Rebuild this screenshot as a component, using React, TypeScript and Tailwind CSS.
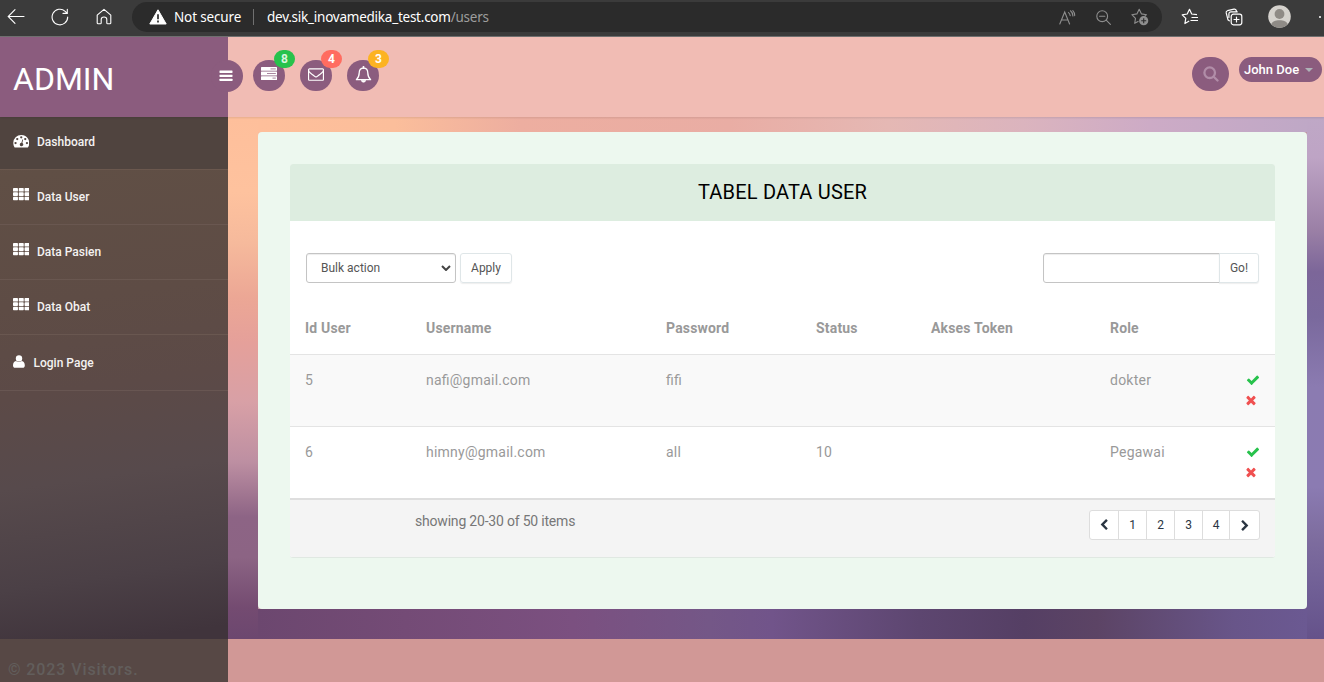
import React from "react";

type IconProps = { className?: string };

const Glyph = ({ d, className, box = "0 0 1792 1792" }: { d: string; className?: string; box?: string }) => (
  <svg viewBox={box} className={className} fill="currentColor" aria-hidden="true">
    <path fillRule="evenodd" d={d} />
  </svg>
);

const CHECK =
  "M1671 566q0 40-28 68l-724 724-136 136q-28 28-68 28t-68-28l-136-136-362-362q-28-28-28-68t28-68l136-136q28-28 68-28t68 28l294 295 656-657q28-28 68-28t68 28l136 136q28 28 28 68z";
const TIMES =
  "M1490 1322q0 40-28 68l-136 136q-28 28-68 28t-68-28l-294-294-294 294q-28 28-68 28t-68-28l-136-136q-28-28-28-68t28-68l294-294-294-294q-28-28-28-68t28-68l136-136q28-28 68-28t68 28l294 294 294-294q28-28 68-28t68 28l136 136q28 28 28 68t-28 68l-294 294 294 294q28 28 28 68z";
const CHEVRON_LEFT =
  "M1427 301l-531 531 531 531q19 19 19 45t-19 45l-166 166q-19 19-45 19t-45-19l-742-742q-19-19-19-45t19-45l742-742q19-19 45-19t45 19l166 166q19 19 19 45t-19 45z";
const ENVELOPE =
  "M1664 1504v-768q-32 36-69 66-268 206-426 338-51 43-83 67t-86.5 48.5-102.5 24.5h-2q-48 0-102.5-24.5t-86.500-48.500-83-67q-158-132-426-338-37-30-69-66v768q0 13 9.500 22.500t22.500 9.500h1472q13 0 22.500-9.500t9.500-22.500zm0-1051v-24.500l-.5-13-3-12.500-5.500-9-9-7.500-14-2.500h-1472q-13 0-22.500 9.500t-9.500 22.500q0 168 147 284 193 152 401 317 6 5 35 29.500t46 37.500 44.500 31.500 50.500 27.500 43 9h2q20 0 43-9t50.500-27.500 44.500-31.500 46-37.500 35-29.500q208-165 401-317 54-43 100.500-115.500t46.500-131.500zm128-37v1088q0 66-47 113t-113 47h-1472q-66 0-113-47t-47-113v-1088q0-66 47-113t113-47h1472q66 0 113 47t47 113z";

const BarsIcon = ({ className }: IconProps) => (
  <svg viewBox="0 0 14 12" className={className} fill="currentColor">
    <rect x="0.5" y="0.6" width="13" height="2.3" rx="0.4" />
    <rect x="0.5" y="4.7" width="13" height="2.3" rx="0.4" />
    <rect x="0.5" y="8.8" width="13" height="2.3" rx="0.4" />
  </svg>
);

const TasksIcon = ({ className }: IconProps) => (
  <svg viewBox="0 0 16 13" className={className}>
    <g fill="#fff">
      <rect width="16" height="3.800" rx="0.5" />
      <rect y="4.6" width="16" height="3.800" rx="0.5" />
      <rect y="9.2" width="16" height="3.800" rx="0.5" />
    </g>
    <g fill="#a986a0">
      <rect x="9.500" y="1.400" width="5.300" height="1" />
      <rect x="6" y="6" width="8.800" height="1" />
      <rect x="11.500" y="10.600" width="3.300" height="1" />
    </g>
  </svg>
);

const BellIcon = ({ className }: IconProps) => (
  <svg viewBox="0 0 16 16" className={className} fill="none" stroke="currentColor" strokeWidth="1.2" strokeLinejoin="round">
    <path d="M8 1.9C5.500 1.9 4 3.800 4 6.200c0 3.400-.9 5-2.700 6.700h13.400C12.900 11.200 12 9.600 12 6.200c0-2.400-1.500-4.300-4-4.300z" />
    <path d="M8 .8v1.100" strokeWidth="1.700" strokeLinecap="round" />
    <path d="M6 13.300a2 2 0 0 0 4 0z" fill="currentColor" strokeWidth="0.600" />
  </svg>
);

const GridIcon = ({ className }: IconProps) => (
  <svg viewBox="0 0 16 12" className={className} fill="currentColor">
    {[0, 4.200, 8.400].map((y) =>
      [0, 5.600, 11.200].map((x) => <rect key={`${x}-${y}`} x={x} y={y} width="4.800" height="3.500" rx="0.700" />),
    )}
  </svg>
);

const GaugeIcon = ({ className }: IconProps) => (
  <svg viewBox="0 0 16 12.600" className={className} fill="currentColor">
    <path
      fillRule="evenodd"
      d="M8 0a8 8 0 0 0-8 8c0 1.500.4 3 1.200 4.200.2.300.4.400.7.400h12.200c.3 0 .5-.1.700-.4A8 8 0 0 0 8 0zM2.300 6.900a1.150 1.150 0 1 1 0 2.300 1.150 1.150 0 0 1 0-2.300zM4 2.900a1.150 1.150 0 1 1 0 2.300 1.150 1.150 0 0 1 0-2.300zM8 1.200a1.150 1.150 0 1 1 0 2.300 1.150 1.150 0 0 1 0-2.300zM12 2.900a1.150 1.150 0 1 1 0 2.300 1.150 1.150 0 0 1 0-2.300zM13.700 6.900a1.150 1.150 0 1 1 0 2.300 1.150 1.150 0 0 1 0-2.300zM9.100 4.400l.8.200-.8 3.400a1.750 1.750 0 1 1-.9-.2z"
    />
  </svg>
);

const UserIcon = ({ className }: IconProps) => (
  <svg viewBox="0 0 12.400 13" className={className} fill="currentColor">
    <circle cx="6.200" cy="3.300" r="3.300" />
    <path d="M3.100 5.900C1 6.200 0 8 0 10.600 0 12.200.9 13 2.300 13h7.600c1.400 0 2.300-.8 2.300-2.400 0-2.600-1-4.400-3.100-4.700-.8.800-1.800 1.200-3 1.200s-2.200-.4-3-1.200z" />
  </svg>
);

const BrowserBar = () => (
  <header className="flex h-[37px] w-full items-center border-b border-[#707070] bg-[#3b3b3b] pb-[3px] font-['Noto_Sans',sans-serif] text-white">
    <svg viewBox="0 0 18 18" className="ml-[7px] size-[18px] shrink-0" fill="none" stroke="#fff" strokeWidth="1.1" strokeLinecap="round">
      <path d="M17 8.500H1.200M8 1.700 1.200 8.500 8 15.300" />
    </svg>
    <svg viewBox="0 0 18 18" className="ml-[26px] size-[18px] shrink-0" fill="none" stroke="#fff" strokeWidth="1.1" strokeLinecap="round">
      <path d="M16.700 9a7.800 7.800 0 1 1-2.500-5.700l1.800 1.900M16.300 1.200v4.200h-4.300" />
    </svg>
    <svg viewBox="0 0 16 17" className="ml-[27px] h-[17px] w-4 shrink-0" fill="none" stroke="#fff" strokeWidth="1.100" strokeLinejoin="round">
      <path d="M1.200 7.200 8 1.300l6.800 5.900v7.700c0 .6-.3.900-.9.900h-2.200c-.6 0-.9-.3-.9-.9v-3.400c0-1.500-1-2.500-2.800-2.500s-2.800 1-2.800 2.500v3.400c0 .6-.3.900-.9.900H2.100c-.6 0-.9-.3-.9-.9z" />
    </svg>
    <div className="ml-[20px] mt-[1px] flex h-[30px] w-[1030px] shrink-0 items-center rounded-full bg-[#2b2b2b] text-[13.500px]">
      <svg viewBox="0 0 18 16" className="ml-[17px] h-4 w-[18px]">
        <path d="M9 .8 17.200 15H.8z" fill="#fff" stroke="#fff" strokeLinejoin="round" />
        <path d="M9 5.200v5M9 11.600v1.800" stroke="#2b2b2b" strokeWidth="1.700" />
      </svg>
      <span className="ml-[7px] w-[79px] whitespace-nowrap tracking-[-0.15px]">Not secure</span>
      <span className="h-4 w-px bg-[#707070]" />
      <span className="ml-[13px] whitespace-nowrap tracking-[-0.24px]">
        dev.sik_inovamedika_test.com<span className="text-[#9d9d9d]">/users</span>
      </span>
      <div className="ml-auto flex items-center pr-[13px] text-[#8e8e8e]">
        <svg viewBox="0 0 17 15" className="mr-[20px] h-[15px] w-[17px]" fill="none" stroke="currentColor" strokeWidth="1.100" strokeLinecap="round">
          <path d="M.8 14 5.700 2l4.900 12M2.500 10h6.400M9.500 2.600c1 .7 1.500 1.600 1.700 3M11.500.8c1.500 1.200 2.300 2.800 2.400 5.200M13.800.6c1.300 1.300 1.900 3 1.900 5" />
        </svg>
        <svg viewBox="0 0 15 15" className="mr-[20px] size-[15px]" fill="none" stroke="currentColor" strokeWidth="1.100" strokeLinecap="round">
          <circle cx="6.200" cy="6.200" r="5.400" />
          <path d="m10.200 10.200 4.200 4.200M3.600 6.200h5.200" />
        </svg>
        <svg viewBox="0 0 18 18" className="size-[18px]" fill="none" stroke="currentColor" strokeWidth="1.100" strokeLinejoin="round">
          <path d="M7.500 13.200 3.700 15.300l.8-5L.9 6.700l5-.8L8.200 1.200l2.300 4.700 5 .8-1.900 1.700" />
          <circle cx="12.700" cy="12.700" r="4.600" fill="currentColor" stroke="none" />
          <path d="M12.700 10.200v5M10.200 12.700h5" stroke="#2b2b2b" />
        </svg>
      </div>
    </div>
    <svg viewBox="0 0 18 18" className="ml-[19px] size-[18px] shrink-0" fill="none" stroke="#fff" strokeWidth="1.200" strokeLinejoin="round">
      <path d="m8.200 13.100-4.300 2.400.9-5.100L1.200 6.800l5-.8 2.300-4.700L10.700 6l5.300.6M10.500 9.500H17M9.500 12.500H17" />
    </svg>
    <svg viewBox="0 0 18 18" className="ml-[26px] size-[18px] shrink-0" fill="none" stroke="#fff" strokeWidth="1.200" strokeLinecap="round">
      <rect x="6.200" y="6.200" width="10.600" height="10.600" rx="2.200" />
      <path d="M11.500 9v5M9 11.500h5M4.300 12.800 3 11.800 1.200 4.900C1 3.800 1.500 3 2.500 2.700L9 1.100c1-.2 1.800.2 2.200 1.200l.3 1.300M3.900 9.500V6c0-1.400.8-2.200 2.200-2.200h6.200" />
    </svg>
    <svg viewBox="0 0 23 23" className="ml-[25px] size-[23px] shrink-0">
      <circle cx="11.500" cy="11.500" r="11.300" fill="#d5d2cd" />
      <circle cx="11.500" cy="9" r="4.900" fill="#8f8b86" />
      <path d="M3.300 19.200c.8-2.900 4-4 8.200-4s7.400 1.100 8.200 4a11.300 11.300 0 0 1-16.400 0z" fill="#8f8b86" />
    </svg>
    <span className="ml-[28px] size-[2px] rounded-full bg-white" />
  </header>
);

const NotifyButton = ({ count, badge, children }: { count: number; badge: string; children: React.ReactNode }) => (
  <div className="relative flex h-[31px] w-8 items-center justify-center rounded-full bg-[#8b5c7e] text-white">
    {children}
    <span className={`absolute -top-[10px] left-[21px] flex h-[18px] w-[21px] items-center justify-center rounded-[9px] text-[12px] font-bold ${badge}`}>
      {count}
    </span>
  </div>
);

const TopBar = () => (
  <div className="z-10 flex h-20 bg-[#f1bcb4] shadow-[0_1px_2px_rgba(0,0,0,0.1)]">
    <div className="relative flex h-20 w-[228px] shrink-0 items-center bg-[#8b5c7e] pl-[13px] pt-1">
      <h1 className="text-[32px] leading-none text-white">ADMIN</h1>
      <div className="absolute left-[211px] top-[23px] flex size-8 items-center justify-center rounded-full bg-[#8b5c7e] pr-[2px]">
        <BarsIcon className="h-3 w-[14px] text-white" />
      </div>
    </div>
    <div className="ml-[25px] flex gap-[15px] pt-[23px]">
      <NotifyButton count={8} badge="bg-[#27c24c] text-[#d9f5df]">
        <TasksIcon className="mb-1 h-[13px] w-4" />
      </NotifyButton>
      <NotifyButton count={4} badge="bg-[#ff6c60] text-white">
        <Glyph d={ENVELOPE} className="mb-[3px] size-4" />
      </NotifyButton>
      <NotifyButton count={3} badge="bg-[#fcb322] text-white">
        <BellIcon className="mb-[3px] size-[17px]" />
      </NotifyButton>
    </div>
    <div className="ml-auto flex items-start pr-[2px] pt-5">
      <div className="mr-[10px] flex h-[34px] w-[37px] items-center justify-center rounded-full bg-[#8b5c7e]">
        <svg viewBox="0 0 16 16" className="size-4" fill="none" stroke="#b18da8" strokeWidth="2.300">
          <circle cx="6.700" cy="6.700" r="5.300" />
          <path d="m10.700 10.700 3.800 3.800" strokeLinecap="round" />
        </svg>
      </div>
      <button className="flex h-[25px] w-[83px] items-center gap-[6px] rounded-full bg-[#8b5c7e] pl-[5px] text-[13px] font-medium text-white">
        <span className="whitespace-nowrap">John Doe</span>
        <svg viewBox="0 0 8 4" className="h-1 w-2">
          <path d="M0 0h8L4 4z" fill="#aeb2b7" />
        </svg>
      </button>
    </div>
  </div>
);

const menu = ["Data User", "Data Pasien", "Data Obat"];

const Sidebar = () => (
  <aside className="flex w-[228px] shrink-0 flex-col bg-linear-[172deg,#64514a_0px,#604f45_60px,#5e4c45_190px,#5c4a47_280px,#574a4c_370px,#4b4046_470px,#40343c_535px] text-[12px] font-medium text-[#f4f2f1]">
    <div className="flex h-[53px] items-center gap-2 border-b border-[#6b584e] bg-[#50443f] pb-[3px] pl-[12.500px]">
      <GaugeIcon className="h-[12.600px] w-[16.500px] text-white" />
      <span>Dashboard</span>
    </div>
    {menu.map((label) => (
      <div key={label} className="flex h-[55px] items-center gap-2 border-b border-[#695750] pl-[12.500px]">
        <GridIcon className="mb-[5px] h-[12.400px] w-[16.500px] text-white" />
        <span>{label}</span>
      </div>
    ))}
    <div className="flex h-[56px] items-center gap-[9px] border-b border-[#685652] pl-[12.500px]">
      <UserIcon className="mb-[3px] h-[13px] w-3 text-white" />
      <span>Login Page</span>
    </div>
  </aside>
);

const head = ["Id User", "Username", "Password", "Status", "Akses Token", "Role", ""];
const rows = [
  ["5", "nafi@gmail.com", "fifi", "", "", "dokter"],
  ["6", "himny@gmail.com", "all", "10", "", "Pegawai"],
];

const UserTable = () => (
  <table className="w-[985px] table-fixed border-collapse text-left text-[14px] text-[#999]">
    <colgroup>
      <col className="w-[121px]" />
      <col className="w-[240px]" />
      <col className="w-[150px]" />
      <col className="w-[115px]" />
      <col className="w-[179px]" />
      <col className="w-[136px]" />
      <col className="w-[44px]" />
    </colgroup>
    <thead>
      <tr className="h-[55px] border-b border-[#e4e4e4]">
        {head.map((h, i) => (
          <th key={i} className="whitespace-nowrap pl-[15px] pt-[4px] font-bold tracking-[0.18px]">
            {h}
          </th>
        ))}
      </tr>
    </thead>
    <tbody>
      {rows.map((r, i) => (
        <tr key={r[0]} className={i === 0 ? "h-[72px] border-b border-[#e4e4e4] bg-[#f9f9f9] align-top" : "h-[72px] align-top"}>
          {r.map((c, j) => (
            <td key={j} className="pl-[15px] pt-[15px] leading-5 tracking-[0.23px] [font-feature-settings:'liga'_1]">
              {c}
            </td>
          ))}
          <td className="pl-[15px] pt-[15px]">
            <Glyph d={CHECK} className="my-[3px] size-[14px] text-[#27c24c]" />
            <Glyph d={TIMES} className="-ml-[2px] mt-[6px] size-[14px] text-[#f05050]" />
          </td>
        </tr>
      ))}
    </tbody>
  </table>
);

const Pagination = () => (
  <div className="flex h-[30px] divide-x divide-[#ddd] rounded-[3px] border border-[#ddd] bg-white text-[12px] text-[#2a3542]">
    <span className="flex w-[29px] items-center justify-center">
      <Glyph d={CHEVRON_LEFT} className="size-3" />
    </span>
    {[1, 2, 3, 4].map((n) => (
      <span key={n} className={n === 4 ? "flex w-[27px] items-center justify-center" : "flex w-[28px] items-center justify-center"}>
        {n}
      </span>
    ))}
    <span className="flex w-[29px] items-center justify-center">
      <Glyph d={CHEVRON_LEFT} className="size-3 rotate-180" />
    </span>
  </div>
);

const Panel = () => (
  <div className="w-[985px] overflow-hidden rounded-[3px] border-b border-[#e0e8e2] bg-white">
    <h2 className="h-[57px] bg-[#ddede0] text-center text-[20px] leading-[57px] tracking-[0.2px] text-black">TABEL DATA USER</h2>
    <div className="flex h-[78px] px-4 pt-8 text-[12px] text-[#555]">
      <div className="flex h-[30px] w-[150px] items-center justify-between rounded-[3px] border border-[#c4c4c4] pl-[14px] pr-1 shadow-[inset_0_1px_1px_rgba(0,0,0,0.075)]">
        <span>Bulk action</span>
        <svg viewBox="0 0 10 6" className="h-[6px] w-[10px]" fill="none" stroke="#444" strokeWidth="2">
          <path d="m1 1 4 4 4-4" />
        </svg>
      </div>
      <button className="ml-1 h-[30px] w-[52px] rounded-[3px] border border-[#dfe6e8] shadow-[0_1px_1px_rgba(90,90,90,0.1)]">Apply</button>
      <div className="ml-auto h-[30px] w-[177px] rounded-l-[3px] border border-[#c4c4c4] shadow-[inset_0_1px_1px_rgba(0,0,0,0.075)]" />
      <button className="-ml-px h-[30px] w-10 rounded-r-[3px] border border-[#dfe6e8] bg-white shadow-[0_1px_1px_rgba(90,90,90,0.1)]">Go!</button>
    </div>
    <UserTable />
    <div className="flex h-[59px] items-start justify-between border-t-2 border-[#dedede] bg-[#f4f4f4] pl-[125px] pr-[15px] text-[14px] text-[#777]">
      <span className="mt-[11px] leading-5 tracking-[-0.2px]">showing 20-30 of 50 items</span>
      <div className="mt-[10px]">
        <Pagination />
      </div>
    </div>
  </div>
);

const Backdrop = ({ children }: { children: React.ReactNode }) => (
  <main className="grid h-[522px] flex-1 grid-cols-[30px_1049px_17px] grid-rows-[15px_477px_30px] bg-linear-[155deg,#febf9b_0%,#b391a8_60%,#66538b_100%]">
    <div className="row-span-3 bg-linear-[180deg,#febf9b_0px,#fec29e_75px,#f6ba9c_125px,#eca795_180px,#e5a09a_225px,#d8a0a6_285px,#bd8fa2_345px,#8d6485_400px,#8c6484_440px,#744b71_490px,#6c476f_522px]" />
    <div className="bg-linear-[90deg,#febf9b_0%,#fbbe9b_13%,#edaea0_25%,#e9ada4_45%,#e5b8b4_60%,#dbb4be_73%,#cdabc6_85%,#bfa8c6_100%]" />
    <div className="row-span-3 bg-linear-[180deg,#bfa8c6_0px,#bea4c5_40px,#9b80a6_113px,#7c6699_155px,#7a699d_200px,#8b7bb1_270px,#8b7bb2_370px,#7e6d9f_420px,#6e5d94_480px,#65528a_522px]" />
    <section className="rounded-[4px] bg-[#edf8ef] p-8">{children}</section>
    <div className="bg-linear-[90deg,#6c476f_0%,#744b76_14%,#7b5080_30%,#745787_43%,#71548a_49%,#5d4670_63%,#553f64_73%,#5c4465_80%,#685589_93%,#6b5992_100%]" />
  </main>
);

export default function App() {
  return (
    <div className="flex h-[682px] w-[1324px] flex-col overflow-hidden font-[Roboto,sans-serif]">
      <BrowserBar />
      <TopBar />
      <div className="flex h-[522px]">
        <Sidebar />
        <Backdrop>
          <Panel />
        </Backdrop>
      </div>
      <footer className="flex h-[43px] bg-[#d19896]">
        <div className="w-[228px] bg-[#574845] pl-2 pt-[19px] text-[16px] font-medium tracking-[0.9px] text-[#625e5c]">© 2023 Visitors.</div>
      </footer>
    </div>
  );
}
